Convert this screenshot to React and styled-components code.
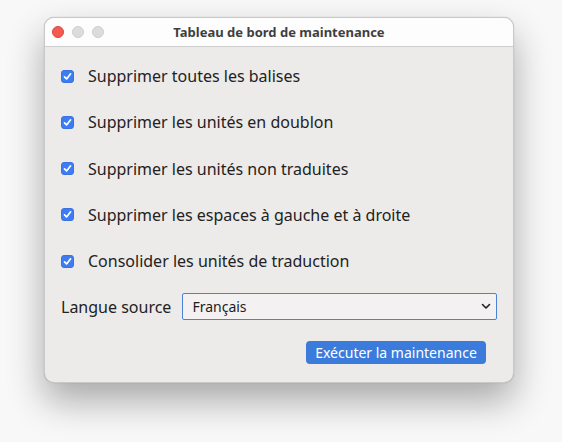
import React, { useState } from "react";
import styled, { createGlobalStyle } from "styled-components";

const GlobalStyle = createGlobalStyle`
  html, body {
    margin: 0;
    padding: 0;
    background: #f8f8f8;
    font-family: "Noto Sans", "Open Sans", sans-serif;
  }
`

const Desktop = styled.div`
  width: 562px;
  height: 442px;
  padding: 17px 0 0 44px;
  box-sizing: border-box;
`

const Window = styled.div`
  display: flex;
  flex-direction: column;
  width: 470px;
  height: 366px;
  background-color: #ecebe9;
  border-radius: 10px;
  border: 1px solid #c9c9c9;
  box-sizing: border-box;
  overflow: hidden;
  box-shadow: 0 18px 36px rgba(0, 0, 0, 0.32), 0 0 1px rgba(0, 0, 0, 0.3);
`

const TitleBar = styled.div`
  position: relative;
  display: flex;
  align-items: center;
  justify-content: center;
  height: 28px;
  background: #fdfdfd;
  border-bottom: 1px solid #cfcfcf;
  flex-shrink: 0;
`

const Lights = styled.div`
  position: absolute;
  left: 7px;
  top: 8px;
  display: flex;
  gap: 8px;
`

const Light = styled.span`
  width: 12px;
  height: 12px;
  border-radius: 50%;
  box-sizing: border-box;
  background: ${(p) => (p.$red ? "#f25a52" : "#dcdcdc")};
  border: 1px solid ${(p) => (p.$red ? "#e0443d" : "#cfcfcf")};
`

const Title = styled.div`
  font-size: 13px;
  font-weight: 700;
  color: #3f3f3f;
`

const Content = styled.div`
  display: flex;
  flex-direction: column;
  padding: 6px 16px 0 16px;
`

const CheckRow = styled.label`
  display: flex;
  align-items: center;
  height: 46.25px;
  gap: 14px;
  font-size: 16px;
  color: #222;
  cursor: pointer;
`

const Box = styled.span`
  display: flex;
  align-items: center;
  justify-content: center;
  width: 13px;
  height: 13px;
  border-radius: 3px;
  background: ${(p) => (p.$checked ? "#3d7cf3" : "#fff")};
  border: 1px solid ${(p) => (p.$checked ? "#3a73e0" : "#aaa")};
  box-sizing: border-box;
`

const LangRow = styled.div`
  display: flex;
  align-items: center;
  gap: 11px;
  margin-top: 9px;
  font-size: 16px;
  color: #222;
  white-space: nowrap;
`

const Select = styled.div`
  display: flex;
  align-items: center;
  justify-content: space-between;
  flex-shrink: 0;
  width: 315px;
  height: 27px;
  box-sizing: border-box;
  padding: 0 5px 0 9px;
  background: #f3f1f2;
  border: 1px solid #4c82d6;
  border-radius: 2px;
  font-size: 14px;
  color: #1d1d1d;
`

const ButtonRow = styled.div`
  display: flex;
  justify-content: flex-end;
  margin-top: 21px;
  padding-right: 11px;
`

const Button = styled.button`
  width: 180px;
  height: 23px;
  border: none;
  border-radius: 4px;
  background: #3b7bdb;
  color: #fff;
  font-family: "Noto Sans", "Open Sans", sans-serif;
  font-size: 14px;
  padding: 0;
  cursor: pointer;
`

const options = [
  "Supprimer toutes les balises",
  "Supprimer les unités en doublon",
  "Supprimer les unités non traduites",
  "Supprimer les espaces à gauche et à droite",
  "Consolider les unités de traduction",
];

function Check({ checked }) {
  return (
    <Box $checked={checked}>
      {checked && (
        <svg width="9" height="9" viewBox="0 0 9 9">
          <path d="M1.5 4.8 L3.6 6.9 L7.6 1.8" fill="none" stroke="#fff" strokeWidth="1.7" strokeLinecap="round" strokeLinejoin="round" />
        </svg>
      )}
    </Box>
  );
}

export default function App() {
  const [checked, setChecked] = useState(options.map(() => true));

  return (
    <Desktop>
      <GlobalStyle />
      <Window>
        <TitleBar>
          <Lights>
            <Light $red />
            <Light />
            <Light />
          </Lights>
          <Title>Tableau de bord de maintenance</Title>
        </TitleBar>
        <Content>
          {options.map((text, i) => (
            <CheckRow
              key={text}
              onClick={() => setChecked(checked.map((c, j) => (j === i ? !c : c)))}
            >
              <Check checked={checked[i]} />
              {text}
            </CheckRow>
          ))}
          <LangRow>
            Langue source
            <Select>
              Français
              <svg width="10" height="7" viewBox="0 0 10 7">
                <path d="M1.5 1.5 L5 5 L8.5 1.5" fill="none" stroke="#222" strokeWidth="1.6" strokeLinecap="round" strokeLinejoin="round" />
              </svg>
            </Select>
          </LangRow>
          <ButtonRow>
            <Button>Exécuter la maintenance</Button>
          </ButtonRow>
        </Content>
      </Window>
    </Desktop>
  );
}
